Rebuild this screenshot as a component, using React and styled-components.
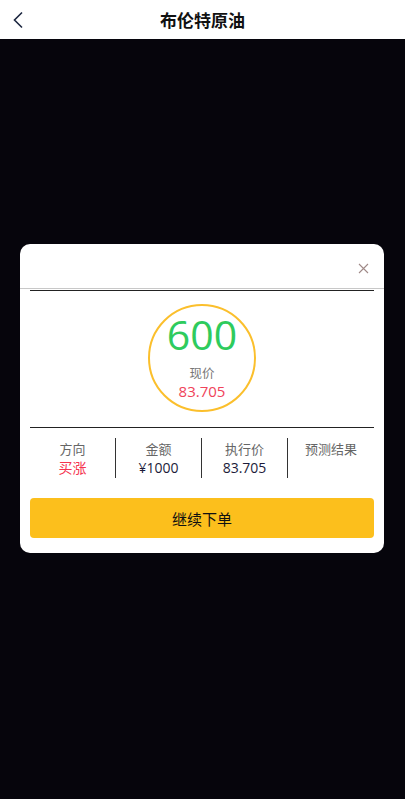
import React from "react";
import styled, { createGlobalStyle } from "styled-components";

const Global = createGlobalStyle`
  html, body { margin: 0; padding: 0; }
  body {
    font-family: "Open Sans", "Noto Sans CJK SC", sans-serif;
    background: #06050c;
  }
  * { box-sizing: border-box; }
`;

const Page = styled.div`
  min-height: 100vh;
  display: flex;
  flex-direction: column;
`;

const NavBar = styled.header`
  height: 39px;
  background: #fff;
  display: flex;
  align-items: center;
  justify-content: center;
  position: relative;
`;

const BackBtn = styled.button`
  position: absolute;
  left: 8px;
  top: 10px;
  width: 20px;
  height: 20px;
  padding: 0;
  border: 0;
  background: none;
  display: flex;
  align-items: center;
  justify-content: center;
`;

const Title = styled.h1`
  margin: 0;
  font-size: 17px;
  font-weight: 700;
  color: #111;
  font-family: "Noto Sans CJK SC", sans-serif;
`;

const Stage = styled.main`
  flex: 1;
  background: #06050c;
  padding: 205px 21px 0 20px;
`;

const Modal = styled.section`
  background: #fff;
  border-radius: 10px;
  overflow: hidden;
`;

const ModalHead = styled.div`
  height: 45px;
  border-bottom: 1px solid #c8c8c8;
  display: flex;
  align-items: center;
  justify-content: flex-end;
  padding-right: 14px;
`;

const CloseBtn = styled.button`
  border: 0;
  background: none;
  padding: 0;
  width: 12px;
  height: 12px;
  display: flex;
  margin-top: 5px;
`;

const ModalBody = styled.div`
  padding: 1px 10px 15px;
`;

const Section = styled.div`
  border-top: 1px solid #222;
  display: flex;
  justify-content: center;
  padding: ${(p) => p.$pad || "0"};
`;

const Ring = styled.div`
  width: 108px;
  height: 108px;
  border-radius: 50%;
  border: 2px solid #fbbf2c;
  display: flex;
  flex-direction: column;
  align-items: center;
`;

const BigNum = styled.div`
  font-size: 41px;
  line-height: 44px;
  height: 44px;
  color: #2ecb5d;
  margin-top: 6px;
  font-family: "Open Sans", sans-serif;
`;

const RingLabel = styled.div`
  font-size: 12.5px;
  color: #777;
  margin-top: 9px;
  line-height: 16px;
  font-family: "Noto Sans CJK SC", sans-serif;
`;

const RingPrice = styled.div`
  font-size: 15px;
  color: #f0435a;
  line-height: 20px;
`;

const Cols = styled.div`
  display: grid;
  grid-template-columns: repeat(4, 1fr);
  width: 100%;
  margin-top: 10px;
`;

const Col = styled.div`
  height: 40px;
  display: flex;
  flex-direction: column;
  align-items: center;
  border-right: ${(p) => (p.$last ? "none" : "1px solid #333")};
`;

const ColLabel = styled.div`
  font-size: 13px;
  color: #666;
  line-height: 18px;
  margin-top: 2px;
  font-family: "Noto Sans CJK SC", sans-serif;
`;

const ColValue = styled.div`
  font-size: 14px;
  line-height: 20px;
  color: ${(p) => p.$color || "#1c1c3a"};
  font-family: "Open Sans", "Noto Sans CJK SC", sans-serif;
`;

const Submit = styled.button`
  display: block;
  width: 100%;
  height: 40px;
  margin-top: 20px;
  border: 0;
  border-radius: 4px;
  background: #fcbf1c;
  color: #111;
  font-size: 15px;
  font-family: "Noto Sans CJK SC", sans-serif;
`;

const cols = [
  { label: "方向", value: "买涨", color: "#f5344f" },
  { label: "金额", value: "¥1000" },
  { label: "执行价", value: "83.705" },
  { label: "预测结果", value: "" },
];

export default function App() {
  return (
    <Page>
      <Global />
      <NavBar>
        <BackBtn aria-label="back">
          <svg width="12" height="18" viewBox="0 0 12 18">
            <path d="M10 1.5 L2.5 9 L10 16.5" fill="none" stroke="#1d2740" strokeWidth="1.6" />
          </svg>
        </BackBtn>
        <Title>布伦特原油</Title>
      </NavBar>
      <Stage>
        <Modal>
          <ModalHead>
            <CloseBtn aria-label="close">
              <svg width="11" height="11" viewBox="0 0 11 11">
                <path d="M1 1 L10 10 M10 1 L1 10" stroke="#a08a88" strokeWidth="1.1" />
              </svg>
            </CloseBtn>
          </ModalHead>
          <ModalBody>
            <Section $pad="13px 0 15px">
              <Ring>
                <BigNum>600</BigNum>
                <RingLabel>现价</RingLabel>
                <RingPrice>83.705</RingPrice>
              </Ring>
            </Section>
            <Section>
              <Cols>
                {cols.map((c, i) => (
                  <Col key={c.label} $last={i === cols.length - 1}>
                    <ColLabel>{c.label}</ColLabel>
                    <ColValue $color={c.color}>{c.value}</ColValue>
                  </Col>
                ))}
              </Cols>
            </Section>
            <Submit>继续下单</Submit>
          </ModalBody>
        </Modal>
      </Stage>
    </Page>
  );
}
